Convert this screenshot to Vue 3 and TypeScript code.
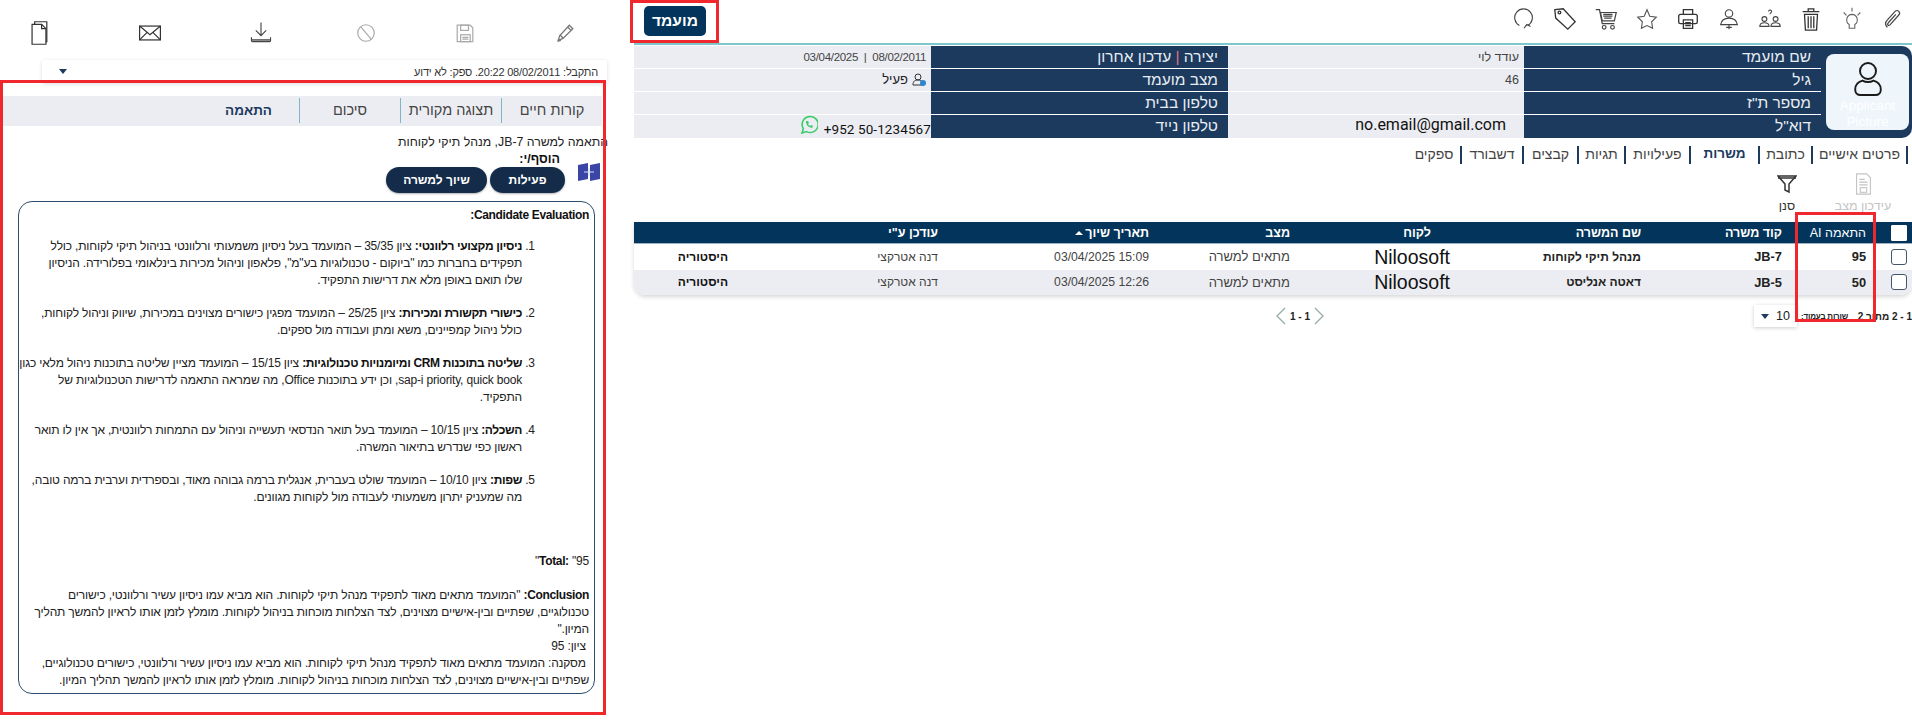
<script setup lang="ts">
const rows = [
  { score: '95', code: 'JB-7', job: 'מנהל תיקי לקוחות', date: '03/04/2025 15:09' },
  { score: '50', code: 'JB-5', job: 'דאטה אנליסט', date: '03/04/2025 12:26' },
]
const tabs = ['פרטים אישיים', 'כתובת', 'משרות', 'פעילויות', 'תגיות', 'קבצים', 'דשבורד', 'ספקים']
</script>

<template>
  <div class="page">
    <section class="left">
      <div class="ltools">
        <svg width="26" height="26" viewBox="0 0 30 30" fill="none" stroke="#333" stroke-width="1.4"><path d="M7 5h11l5 5v18H7z"/><path d="M18 5v5h5"/><path d="M10 5V2h14v23h-1"/></svg>
        <svg width="26" height="26" viewBox="0 0 30 30" fill="none" stroke="#333" stroke-width="1.4"><rect x="3" y="7" width="24" height="16"/><path d="M3 7l12 10L27 7M3 23l9-9M27 23l-9-9"/></svg>
        <svg width="26" height="26" viewBox="0 0 30 30" fill="none" stroke="#444" stroke-width="1.3"><path d="M15 3v15M9 12l6 6 6-6"/><path d="M4 20v4a1 1 0 0 0 1 1h20a1 1 0 0 0 1-1v-4"/><path d="M4 23h22" stroke-width="1.6"/></svg>
        <svg width="26" height="26" viewBox="0 0 30 30" fill="none" stroke="#aaa" stroke-width="1.4"><circle cx="15" cy="15" r="9.5"/><path d="M9 8l12 14"/></svg>
        <svg width="26" height="26" viewBox="0 0 30 30" fill="none" stroke="#aaa" stroke-width="1.4"><path d="M6 6h15l3 3v16H6z"/><rect x="10" y="6" width="9" height="6"/><rect x="10" y="17" width="11" height="8"/><path d="M12 20h7M12 22h7"/></svg>
        <svg width="26" height="26" viewBox="0 0 30 30" fill="none" stroke="#777" stroke-width="1.5"><path d="M7 24l2-6L20 6l4 4-11 11z"/><path d="M18 8l4 4M9 17l4 4"/><path d="M7 24l3-1" stroke-width="2.4"/></svg>
      </div>
      <div class="received">
        <span>התקבל: 08/02/2011 20:22. ספק: לא ידוע</span>
        <i class="caret"></i>
      </div>
      <div class="ltabs">
        <span>קורות חיים</span>
        <span>תצוגה מקורית</span>
        <span>סיכום</span>
        <span class="on">התאמה</span>
      </div>
      <div class="match-title">התאמה למשרה JB-7, מנהל תיקי לקוחות</div>
      <div class="add-row">
        <svg class="book" width="22" height="18" viewBox="0 0 22 18"><path d="M0 2l10 -2v16L0 18z" fill="#3a45a5"/><path d="M22 0l-10 2v16l10-2z" fill="#3a45a5"/><path d="M6 9h10M11 5v8" stroke="#cfe0f5" stroke-width="1.2"/></svg>
        <div class="add-col">
          <b class="add">הוסף/י:</b>
          <div class="btns">
            <button class="pill p1">פעילות</button>
            <button class="pill p2">שיוך למשרה</button>
          </div>
        </div>
      </div>
      <div class="box">
        <p class="head"><b>Candidate Evaluation:</b></p>
        <ol>
          <li><b>ניסיון מקצועי רלוונטי:</b> ציון 35/35 – המועמד בעל ניסיון משמעותי ורלוונטי בניהול תיקי לקוחות, כולל<br>תפקידים בחברות כמו "ביוקום - טכנולוגיות בע"מ", פלאפון וניהול מכירות בינלאומי בפלורידה. הניסיון<br>שלו תואם באופן מלא את דרישות התפקיד.</li>
          <li><b>כישורי תקשורת ומכירות:</b> ציון 25/25 – המועמד מפגין כישורים מצוינים במכירות, שיווק וניהול לקוחות,<br>כולל ניהול קמפיינים, משא ומתן ועבודה מול ספקים.</li>
          <li><b>שליטה בתוכנות CRM ומיומנויות טכנולוגיות:</b> ציון 15/15 – המועמד מציין שליטה בתוכנות ניהול מלאי כגון<br>sap-i priority, quick book, וכן ידע בתוכנות Office, מה שמראה התאמה לדרישות הטכנולוגיות של<br>התפקיד.</li>
          <li><b>השכלה:</b> ציון 10/15 – המועמד בעל תואר הנדסאי תעשייה וניהול עם התמחות רלוונטית, אך אין לו תואר<br>ראשון כפי שנדרש בתיאור המשרה.</li>
          <li><b>שפות:</b> ציון 10/10 – המועמד שולט בעברית, אנגלית ברמה גבוהה מאוד, ובספרדית וערבית ברמה טובה,<br>מה שמעניק יתרון משמעותי לעבודה מול לקוחות מגוונים.</li>
        </ol>
        <p class="total"><b>Total:</b> "95"</p>
        <p class="concl"><b>Conclusion:</b> "המועמד מתאים מאוד לתפקיד מנהל תיקי לקוחות. הוא מביא עמו ניסיון עשיר ורלוונטי, כישורים<br>טכנולוגיים, שפתיים ובין-אישיים מצוינים, לצד הצלחות מוכחות בניהול לקוחות. מומלץ לזמן אותו לראיון להמשך תהליך<br>המיון."<br>&nbsp;ציון: 95<br>&nbsp;מסקנה: המועמד מתאים מאוד לתפקיד מנהל תיקי לקוחות. הוא מביא עמו ניסיון עשיר ורלוונטי, כישורים טכנולוגיים,<br>שפתיים ובין-אישיים מצוינים, לצד הצלחות מוכחות בניהול לקוחות. מומלץ לזמן אותו לראיון להמשך תהליך המיון.</p>
      </div>
    </section>

    <section class="right">
      <div class="rtop">
        <button class="cand">מועמד</button>
        <div class="ricons">
          <svg width="26" height="26" viewBox="0 0 28 28" fill="none" stroke="#444" stroke-width="1.2"><path d="M9 21a9.5 9.5 0 1 1 9 0"/><path d="M14 24l3-4 4 2"/></svg>
          <svg width="26" height="26" viewBox="0 0 28 28" fill="none" stroke="#333" stroke-width="1.4"><path d="M3 4l9-1 13 14-8 8L4 13z"/><circle cx="8" cy="7" r="1.5"/></svg>
          <svg width="26" height="26" viewBox="0 0 28 28" fill="none" stroke="#444" stroke-width="1.3"><path d="M3 4h4l3 15h13"/><path d="M8 7h17l-2 9H10z"/><path d="M11 9h10M11 11h10M12 13h8"/><circle cx="12" cy="23" r="2"/><circle cx="21" cy="23" r="2"/></svg>
          <svg width="26" height="26" viewBox="0 0 28 28" fill="none" stroke="#555" stroke-width="1.2"><path d="M14 4l3 7 7 1-5 5 1 7-6-3-6 3 1-7-5-5 7-1z"/></svg>
          <svg width="26" height="26" viewBox="0 0 28 28" fill="none" stroke="#333" stroke-width="1.4"><path d="M9 9V4h10v5"/><rect x="4" y="9" width="20" height="10" rx="2"/><path d="M9 15h10v9H9z"/><path d="M11 18h6M11 21h6"/></svg>
          <svg width="26" height="26" viewBox="0 0 28 28" fill="none" stroke="#444" stroke-width="1.2"><circle cx="14" cy="8" r="4"/><path d="M5 20c1-6 5-7 9-7s8 1 9 7z"/><path d="M14 20v5M11 23l6 0"/></svg>
          <svg width="26" height="26" viewBox="0 0 28 28" fill="none" stroke="#444" stroke-width="1.2"><circle cx="8" cy="14" r="2.6"/><path d="M3 22c0-3 2-4 5-4s5 1 5 4z"/><circle cx="20" cy="14" r="2.6"/><path d="M15 22c0-3 2-4 5-4s5 1 5 4z"/><path d="M12.5 6a1.6 1.6 0 1 1 2.4 1.4c-.6.4-.9.7-.9 1.6"/></svg>
          <svg width="26" height="26" viewBox="0 0 28 28" fill="none" stroke="#333" stroke-width="1.4"><path d="M5 6h18M11 6V3h6v3"/><path d="M7 9h14l-1 17H8z"/><path d="M11 11v13M14 11v13M17 11v13"/></svg>
          <svg width="26" height="26" viewBox="0 0 28 28" fill="none" stroke="#666" stroke-width="1.2"><path d="M14 9a6 6 0 0 1 3 11v4h-6v-4a6 6 0 0 1 3-11z"/><path d="M14 2v4M5 7l3 3M23 7l-3 3"/></svg>
          <svg width="26" height="26" viewBox="0 0 28 28" fill="none" stroke="#444" stroke-width="1.3"><path d="M8 23c-3-3-2-6 0-8l8-9c3-3 7 1 4 4l-9 10c-2 2-4 0-2-2l8-9"/></svg>
        </div>
      </div>
      <div class="info">
        <div class="pic-cell">
          <div class="pic">
            <svg viewBox="0 0 40 46" fill="none" stroke="#1a1a1a" stroke-width="2.4"><circle cx="20" cy="13" r="10"/><path d="M13 25C6 27 4 31 4 36c0 5 3 7 7 7h18c4 0 7-2 7-7 0-5-2-9-9-11-4 2-10 2-14 0z"/></svg>
            <span>Applicant Picture</span>
          </div>
        </div>
        <div class="lab">שם מועמד</div><div class="val">עודד לוי</div><div class="lab">יצירה <i class="pipe">|</i> עדכון אחרון</div><div class="val date">08/02/2011 &nbsp;|&nbsp; 03/04/2025</div>
        <div class="lab">גיל</div><div class="val">46</div><div class="lab">מצב מועמד</div>
        <div class="val dark">
          <svg width="14" height="14" viewBox="0 0 14 14" fill="none" stroke="#333" stroke-width="1"><circle cx="6" cy="4" r="3"/><path d="M1 12c0-4 2-5 5-5s5 1 5 5z"/><circle cx="11" cy="10" r="3" fill="#2a86d0" stroke="none"/></svg>
          <span>פעיל</span>
        </div>
        <div class="lab">מספר ת"ז</div><div class="val"></div><div class="lab">טלפון בבית</div><div class="val"></div>
        <div class="lab">דוא"ל</div><div class="val mail">no.email@gmail.com</div><div class="lab">טלפון נייד</div>
        <div class="val phone">
          <span dir="ltr">+952 50-1234567</span>
          <svg width="18" height="20" viewBox="0 0 18 20" fill="none" stroke="#3ecb6b" stroke-width="1.6"><path d="M2 18l1.3-4.4A8 8 0 1 1 6.5 16.6z"/><path d="M6 6c0 4 2 6 6 7l1-2-2-1-1 1c-1-.5-1.5-1.2-2-2l1-1-1-2z" fill="#3ecb6b" stroke="none"/></svg>
        </div>
      </div>
      <nav class="rtabs">
        <span v-for="t in tabs" :key="t" :class="{ on: t === 'משרות' }">{{ t }}</span>
      </nav>
      <div class="actions">
        <div class="act off">
          <svg width="24" height="26" viewBox="0 0 24 26" fill="none" stroke="#c4c4c4" stroke-width="1.2"><path d="M5 2h11l4 4v18H5z"/><path d="M8 8h6M8 11h9M8 14h9"/><rect x="9" y="17" width="7" height="5"/></svg>
          <span>עידכון מצב</span>
        </div>
        <div class="act">
          <svg width="20" height="18" viewBox="0 0 20 18" fill="none" stroke="#333" stroke-width="1.5"><path d="M1 1h18l-7 8v8l-4-2V9z"/><path d="M1 3h18"/></svg>
          <span>סנן</span>
        </div>
      </div>
      <div class="table">
        <div class="tr th">
          <div><i class="chk head-chk"></i></div>
          <div class="thin">התאמה AI</div>
          <div>קוד משרה</div>
          <div>שם המשרה</div>
          <div>לקוח</div>
          <div>מצב</div>
          <div>תאריך שיוך<i class="up"></i></div>
          <div>עודכן ע"י</div>
          <div></div>
        </div>
        <div v-for="r in rows" :key="r.code" class="tr td">
          <div><i class="chk"></i></div>
          <div class="b num">{{ r.score }}</div>
          <div class="b num">{{ r.code }}</div>
          <div class="b">{{ r.job }}</div>
          <div class="client">Niloosoft</div>
          <div class="st">מתאים למשרה</div>
          <div class="when"><span dir="ltr">{{ r.date }}</span></div>
          <div class="by">דנה אטרקצי</div>
          <div class="b hist">היסטוריה</div>
        </div>
      </div>
      <div class="pager">
        <span class="range">1 - 2 מתוך 2</span>
        <span class="per">שורות בעמוד:</span>
        <div class="select"><span>10</span><i class="caret"></i></div>
        <div class="pages">
          <svg width="12" height="20" viewBox="0 0 12 20" fill="none" stroke="#9aa" stroke-width="1.3"><path d="M2 2l8 8-8 8"/></svg>
          <b>1 - 1</b>
          <svg width="12" height="20" viewBox="0 0 12 20" fill="none" stroke="#9aa" stroke-width="1.3"><path d="M10 2l-8 8 8 8"/></svg>
        </div>
      </div>
    </section>

    <i class="frame f-left"></i>
    <i class="frame f-btn"></i>
    <i class="frame f-ai"></i>
  </div>
</template>

<style>
html, body { margin: 0; background: #fff; overflow: hidden; }
</style>

<style scoped>
.page { position: relative; display: flex; width: 1912px; height: 720px; overflow: hidden; background: #fff; font-family: "Liberation Sans", sans-serif; color: #333; }
.left { width: 634px; flex: none; box-sizing: border-box; direction: ltr; }
.ltools { display: grid; grid-template-columns: 111px 111px 105px 99px 100px 26px; height: 60px; padding: 20px 0 0 26px; box-sizing: border-box; }
.received { direction: rtl; display: flex; justify-content: space-between; align-items: center; box-sizing: border-box; width: 565px; height: 23px; margin-left: 42px; padding: 0 9px 0 17px; font-size: 11px; letter-spacing: -.2px; box-shadow: 0 1px 4px rgba(0,0,0,.14); border-radius: 3px; }
.caret { display: block; width: 0; height: 0; border-left: 4px solid transparent; border-right: 4px solid transparent; border-top: 5px solid #1c3a5e; }
.ltabs { direction: rtl; display: flex; width: 602px; height: 30px; margin-top: 13px; background: #ecedf2; box-sizing: border-box; padding-top: 2px; }
.ltabs span { width: 101px; height: 25px; line-height: 25px; text-align: center; font-size: 14.5px; border-left: 1px solid #7fb4c6; box-sizing: border-box; color: #444; }
.ltabs span:last-child { border-left: 0; }
.ltabs .on { font-weight: 700; font-size: 13.5px; color: #1c3a5e; }
.match-title { direction: rtl; width: 608px; margin-top: 8px; height: 17px; line-height: 17px; font-size: 12.3px; color: #222; }
.add-row { direction: rtl; width: 600px; display: flex; height: 50px; }
.book { margin-top: 12px; flex: none; }
.add-col { margin-right: 18px; }
.add { display: block; font-size: 12.5px; line-height: 17px; height: 16px; color: #111; }
.btns { display: flex; gap: 3px; margin-right: -5px; }
.pill { flex: none; height: 26px; border: 0; border-radius: 13px; background: #142c4a; color: #fff; font: 700 12px "Liberation Sans", sans-serif; padding: 0; box-shadow: 0 1px 2px rgba(0,0,0,.3); }
.p1 { width: 75px; }
.p2 { width: 101px; }
.box { direction: rtl; box-sizing: border-box; width: 577px; height: 493px; margin: 0 0 0 18px; padding: 5px 5px 0 0; border: 1px solid #2a4d70; border-radius: 14px; font-size: 12px; letter-spacing: -.18px; line-height: 17px; color: #222; white-space: nowrap; }
.box p { margin: 0; }
.box b { color: #111; letter-spacing: -.35px; }
.box ol { margin: 14px 0 0; padding: 0 67px 0 0; }
.box li + li { margin-top: 16px; }
.total { margin-top: 47px !important; }
.concl { margin-top: 17px !important; }
.right { flex: 1; min-width: 0; }
.rtop { direction: ltr; display: flex; justify-content: space-between; height: 43px; box-sizing: border-box; padding: 6px 0 0 10px; }
.cand { width: 62px; height: 30px; border: 0; border-radius: 5px; background: #03355c; color: #fff; font: 700 15.5px "Liberation Sans", sans-serif; padding: 0; }
.ricons { display: flex; gap: 15px; padding: 0 6px 0 0; }
.info { direction: rtl; display: grid; grid-template-columns: 91px 297px 296px 297px 297px; grid-template-rows: 22px 22px 22px 23px; row-gap: 1px; border-top: 2px solid #7cc6cc; padding-top: 1px; height: 93px; }
.pic-cell { grid-row: 1 / 5; background: #1c3a5e; border-top-right-radius: 10px; border-bottom-right-radius: 10px; padding: 8px 3px 8px 5px; }
.pic { height: 76px; background: #eef6fb; border-radius: 8px; text-align: center; position: relative; font-size: 13.5px; color: #fff; line-height: 16px; direction: ltr; }
.pic svg { padding-top: 6px; display: block; margin-left: auto; margin-right: auto; width: 32px; height: 38px; }
.pic span { position: absolute; left: 0; right: 0; bottom: 0; }
.lab { background: #1c3a5e; color: #e8edf3; font-size: 15.5px; line-height: 22px; padding-right: 10px; white-space: nowrap; }
.pipe { color: #e2738a; font-style: normal; }
.val { background: #ecedf2; font-size: 12.5px; line-height: 22px; padding-right: 5px; color: #444; white-space: nowrap; }
.date { font-size: 11.5px; letter-spacing: -.3px; }
.dark { display: flex; align-items: center; gap: 4px; font-size: 13px; color: #222; }
.mail { font: 16px/20px Roboto, sans-serif; color: #111; padding-right: 18px; }
.phone { display: flex; align-items: flex-start; gap: 6px; font: 13.5px/22px Roboto, sans-serif; color: #111; padding-right: 0; letter-spacing: .1px; }
.phone span { margin-top: 3px; }
.rtabs { direction: rtl; display: grid; grid-template-columns: 95px 53px 69px 65px 47px 55px 62px 52px; justify-content: start; height: 26px; padding: 7px 6px 0 0; }
.rtabs span { height: 18px; line-height: 16px; text-align: center; font-size: 14px; color: #444; border-left: 2px solid #1c3a5e; box-sizing: border-box; }
.rtabs span:first-child { box-shadow: 2px 0 0 #1c3a5e; }
.rtabs span:last-child { border-left: 0; }
.rtabs .on { font-weight: 700; color: #1c3a5e; font-size: 13.5px; }
.actions { direction: rtl; display: flex; height: 50px; padding: 0 11px 0 0; }
.act { width: 76px; text-align: center; font-size: 12.5px; color: #333; }
.act svg { display: block; margin: 0 auto; height: 24px; margin-top: 0; }
.act span { display: block; line-height: 16px; margin-top: 2px; }
.off { color: #c4c4c4; }
.table { direction: rtl; border-radius: 0 0 12px 12px; box-shadow: 0 2px 4px rgba(0,0,0,.16); }
.tr { display: grid; grid-template-columns: 42px 84px 141px 210px 141px 141px 211px 210px 98px; align-items: center; }
.tr > div { padding-right: 4px; white-space: nowrap; font-size: 13px; }
.th { height: 21px; background: #03355c; color: #fff; border-bottom: 1px solid #9fb2c2; }
.th > div { font-weight: 700; font-size: 12.5px; }
.th .thin { font-weight: 400; }
.td { height: 25.5px; color: #444; }
.td:nth-child(3) { background: #ecedf2; border-radius: 0 0 12px 12px; }
.tr > .b { font-weight: 700; color: #222; font-size: 12px; }
.tr > .num { font-size: 12.8px; }
.tr > .hist { color: #111; }
.tr > .client { font-size: 19.5px; color: #111; margin-right: -19px; line-height: 20px; }
.tr > .when { font-size: 12.2px; }
.tr > .by { font-size: 12px; }
.chk { display: block; box-sizing: border-box; width: 16px; height: 16px; margin-right: 1px; border: 1px solid #44576a; border-radius: 3px; background: #fff; }
.head-chk { border-color: #fff; border-radius: 1px; }
.up { display: inline-block; margin-right: 2px; border-left: 4px solid transparent; border-right: 4px solid transparent; border-bottom: 4px solid #fff; vertical-align: 2px; }
.pager { direction: rtl; display: flex; align-items: center; height: 24px; margin-top: 9px; font-size: 10px; font-weight: 700; color: #222; white-space: nowrap; }
.range { width: 52px; flex: none; }
.per { width: 51px; padding-right: 12px; flex: none; font-size: 8px; letter-spacing: -.2px; }
.select { display: flex; align-items: center; justify-content: space-between; box-sizing: border-box; width: 43px; height: 22px; padding: 0 7px; box-shadow: 0 1px 4px rgba(0,0,0,.2); font-size: 12.5px; font-weight: 400; }
.pages { display: flex; align-items: center; gap: 3px; margin-right: 429px; font-size: 10px; }
.frame { position: absolute; box-sizing: border-box; border: 3.5px solid #f0282d; pointer-events: none; }
.f-left { left: 0; top: 80px; width: 606px; height: 635px; }
.f-btn { left: 630px; top: 0; width: 89px; height: 43px; }
.f-ai { left: 1795px; top: 212px; width: 81px; height: 110px; }
</style>
